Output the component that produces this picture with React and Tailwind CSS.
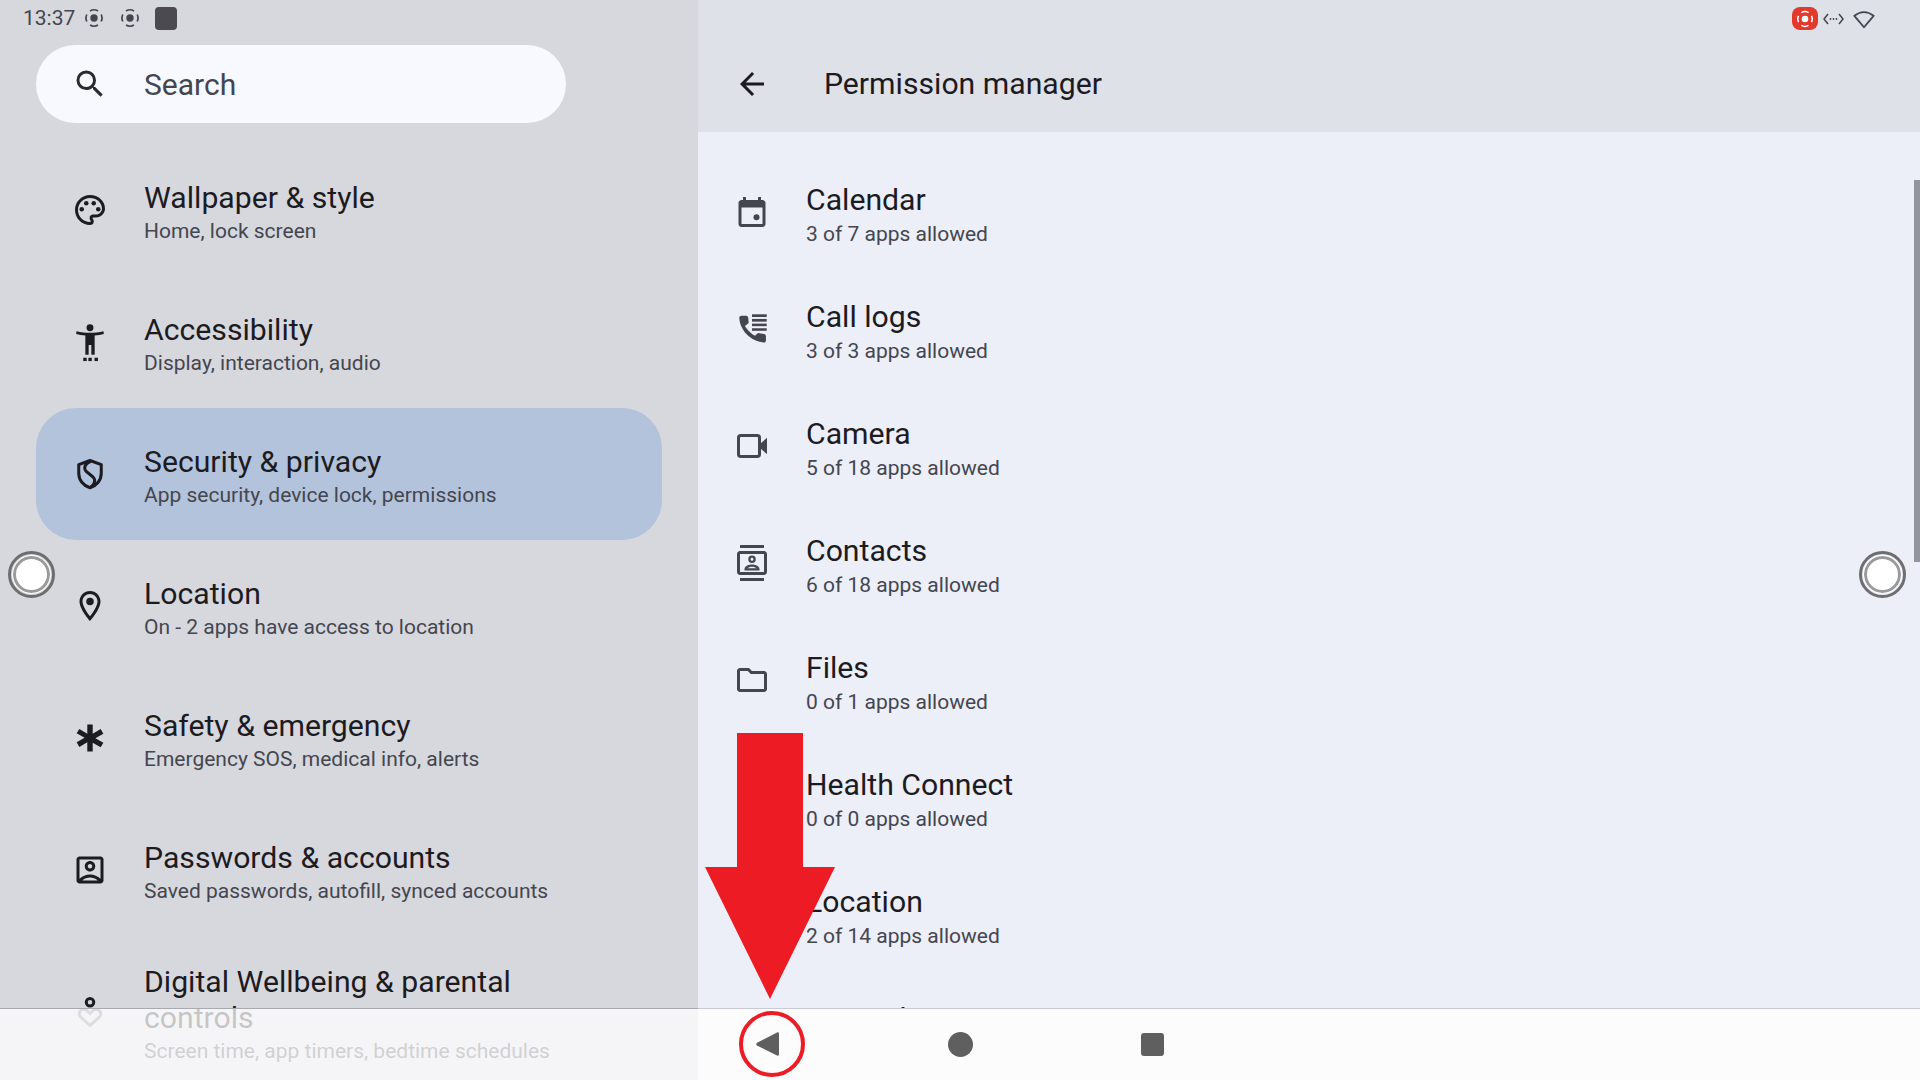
import React from "react";
import { MdSearch, MdOutlinePalette, MdOutlineLocationOn, MdOutlineAccountBox, MdArrowBack, MdOutlineContacts, MdOutlineFolder } from "react-icons/md";

const font = { fontFamily: "Roboto, sans-serif" };

function Access({ className }) {
  return (
    <svg viewBox="0 0 24 24" className={className} fill="currentColor" style={{ overflow: "visible" }}>
      <circle cx="12" cy="2.500" r="2.300" />
      <path d="M3 4.900c3 .7 6 1 9 1s6-.3 9-1l.2 1.800c-2 .5-4 .8-6.100 1v12.800h-2.200V14h-1.800v6.500H8.900V7.700c-2.100-.2-4.100-.5-6.100-1z" />
      <rect x="7.500" y="22.500" width="2.300" height="2.200" />
      <rect x="10.900" y="22.500" width="2.300" height="2.200" />
      <rect x="15" y="22.500" width="2.300" height="2.200" />
    </svg>
  );
}
function Shield({ className }) {
  return (
    <svg viewBox="0 0 24 24" className={className} fill="none" stroke="currentColor" strokeWidth="2">
      <path d="M12 3l7.500 2.700v5.800c0 4.500-3 8.300-7.500 9.700-4.500-1.400-7.500-5.200-7.500-9.700V5.700z" strokeLinejoin="round" />
      <path d="M12.500 3.500C8.500 5 7.500 8 9.500 10.300l4.500 3.700c2 1.800 1.200 5-1.500 6.500" />
    </svg>
  );
}
function Star({ className }) {
  return (
    <svg viewBox="0 0 24 24" className={className} fill="currentColor">
      <path d="M10.200 3h3.600v6.100l5.300-3.100 1.800 3.100-5.300 3 5.300 3-1.800 3.100-5.300-3.100V21h-3.600v-6.100l-5.300 3.100-1.800-3.100 5.300-3-5.300-3L4.900 6l5.300 3.100z" />
    </svg>
  );
}
function Wellbeing({ className }) {
  return (
    <svg viewBox="0 0 24 24" className={className} fill="none" stroke="currentColor" strokeWidth="2">
      <circle cx="12" cy="5.500" r="2.500" />
      <path strokeOpacity="0.5" d="M12 21l-6.200-5.600a2.900 2.900 0 0 1 0-4.300c1.200-1.100 3-1.100 4.200 0L12 13l2-1.900c1.200-1.100 3-1.100 4.200 0a2.900 2.900 0 0 1 0 4.300z" />
    </svg>
  );
}
function CalendarIcon({ className }) {
  return (
    <svg viewBox="0 0 24 24" className={className} fill="currentColor">
      <path d="M19 4h-1V2h-2v2H8V2H6v2H5c-1.100 0-2 .9-2 2v14c0 1.100.9 2 2 2h14c1.100 0 2-.9 2-2V6c0-1.100-.9-2-2-2zm0 16H5V9h14v11z" />
      <circle cx="15" cy="15.500" r="2" />
    </svg>
  );
}
function CallLog({ className }) {
  return (
    <svg viewBox="0 0 24 24" className={className} fill="currentColor">
      <path d="M3.500 4.500C3.500 3.700 4.200 3.200 5 3.200h3c1 0 1.500.6 1.500 1.600L9.800 8 7.300 10c1.400 2.500 4.200 5.300 6.700 6.500l2-1.800 4 .6c.9.2 1.300.7 1.300 1.500v2.700c0 1-.7 1.700-1.700 1.500C11 20 4 13 3.500 4.500z" />
      <rect x="12" y="2.200" width="9.800" height="1.800" />
      <rect x="12" y="5.300" width="9.800" height="1.800" />
      <rect x="12" y="8.400" width="9.800" height="1.700" />
      <rect x="12" y="11.500" width="9.800" height="1.700" />
    </svg>
  );
}
function Video({ className }) {
  return (
    <svg viewBox="0 0 24 24" className={className} fill="none" stroke="currentColor">
      <rect x="3" y="5" width="14" height="14" rx="1.500" strokeWidth="2" />
      <path d="M17.500 10.500L22 6.500v11l-4.500-4z" fill="currentColor" strokeWidth="0" />
    </svg>
  );
}
function Rec({ className }) {
  return (
    <svg viewBox="0 0 20 20" className={className} fill="none" stroke="currentColor" strokeWidth="1.700">
      <circle cx="10" cy="10" r="3.700" fill="currentColor" stroke="none" />
      <path d="M2.800 13.500A8.100 8.100 0 0 1 2.800 6.500M6 2.900A8.100 8.100 0 0 1 14 2.900M17.200 6.500A8.100 8.100 0 0 1 17.200 13.500M14 17.100A8.100 8.100 0 0 1 6 17.100" />
    </svg>
  );
}

const left = [
  { t: "Wallpaper & style", s: "Home, lock screen", I: MdOutlinePalette },
  { t: "Accessibility", s: "Display, interaction, audio", I: Access },
  { t: "Security & privacy", s: "App security, device lock, permissions", I: Shield, on: true },
  { t: "Location", s: "On - 2 apps have access to location", I: MdOutlineLocationOn },
  { t: "Safety & emergency", s: "Emergency SOS, medical info, alerts", I: Star },
  { t: "Passwords & accounts", s: "Saved passwords, autofill, synced accounts", I: MdOutlineAccountBox },
];

const right = [
  { t: "Calendar", s: "3 of 7 apps allowed", I: CalendarIcon },
  { t: "Call logs", s: "3 of 3 apps allowed", I: CallLog },
  { t: "Camera", s: "5 of 18 apps allowed", I: Video },
  { t: "Contacts", s: "6 of 18 apps allowed", I: MdOutlineContacts },
  { t: "Files", s: "0 of 1 apps allowed", I: MdOutlineFolder },
  { t: "Health Connect", s: "0 of 0 apps allowed" },
  { t: "Location", s: "2 of 14 apps allowed" },
  { t: "Microphone", s: "1 of 8 apps allowed" },
];

function Touch({ className }) {
  return (
    <div className={`absolute w-[47px] h-[47px] rounded-full border-[3px] border-[#6e6e70] flex items-center justify-center ${className}`}>
      <div className="w-[37px] h-[37px] rounded-full bg-white border-[3px] border-[#9a9a9c] outline outline-1 outline-white" />
    </div>
  );
}

export default function App() {
  return (
    <div className="relative w-[1920px] h-[1080px] overflow-hidden flex bg-[#eceef8]" style={font}>
      <aside className="w-[698px] h-full bg-[#d7d8de] shrink-0">
        <div className="h-[36px] mb-[9px] flex items-center pl-[23px] text-[#44464f]">
          <span className="text-[21px] leading-none">13:37</span>
          <Rec className="w-[20px] h-[20px] ml-[9px]" />
          <Rec className="w-[20px] h-[20px] ml-[16px]" />
          <div className="w-[22px] h-[23px] ml-[15px] rounded-[4px] bg-[#4a4a50]" />
        </div>
        <div className="mx-[36px] w-[530px] h-[78px] rounded-full bg-[#f8f9ff] flex items-center text-[#44464f] pl-[38px]">
          <MdSearch className="w-[36px] h-[36px] -ml-[2px] shrink-0 text-[#2a2b30]" />
          <span className="ml-[36px] mt-[2px] text-[30px] leading-none">Search</span>
        </div>
        <div className="mt-[21px] px-[36px]">
          {left.map(({ t, s, I, on }) => (
            <div key={t} className={`h-[132px] w-[626px] flex items-center pl-[36px] rounded-[40px] ${on ? "bg-[#b3c3db]" : ""}`}>
              <I className="w-[36px] h-[36px] shrink-0 text-[#1b1b21]" />
              <div className="ml-[36px] pt-[6px]">
                <div className="text-[30.2px] leading-[36px] text-[#1b1b21]">{t}</div>
                <div className="text-[21px] leading-[30px] text-[#44464f]">{s}</div>
              </div>
            </div>
          ))}
          <div className="w-[626px] flex items-center pl-[36px] pt-[26px]">
            <Wellbeing className="w-[36px] h-[36px] mb-[4px] shrink-0 text-[#1b1b21]" />
            <div className="ml-[36px] pt-[2px]">
              <div className="text-[30.2px] leading-[36px] text-[#1b1b21] w-[440px]">Digital Wellbeing &amp; parental controls</div>
              <div className="text-[21px] leading-[30px] text-[#44464f]">Screen time, app timers, bedtime schedules</div>
            </div>
          </div>
        </div>
      </aside>
      <main className="flex-1 h-full">
        <header className="h-[132px] bg-[#dfe1e9] relative flex items-center pl-[36px] pt-[36px]">
          <MdArrowBack className="w-[36px] h-[36px] text-[#1b1b21]" />
          <span className="ml-[54px] text-[30.2px] leading-none text-[#1b1b21]">Permission manager</span>
          <div className="absolute right-[45px] top-[7px] flex items-center text-[#44464f]">
            <div className="w-[26px] h-[23px] rounded-[8px] bg-[#e3382c] flex items-center justify-center text-white">
              <Rec className="w-[18px] h-[18px]" />
            </div>
            <svg viewBox="0 0 21 12" className="ml-[5px] w-[21px] h-[12px]" fill="none" stroke="currentColor" strokeWidth="1.500">
              <path d="M5 1L1 6l4 5M16 1l4 5-4 5" />
              <circle cx="7.500" cy="6" r=".9" fill="currentColor" stroke="none" />
              <circle cx="10.500" cy="6" r=".9" fill="currentColor" stroke="none" />
              <circle cx="13.500" cy="6" r=".9" fill="currentColor" stroke="none" />
            </svg>
            <svg viewBox="0 0 24 24" className="ml-[9px] w-[22px] h-[22px]" fill="none" stroke="currentColor" strokeWidth="2">
              <path d="M1.500 8.500Q12 .5 22.500 8.500L12 21z" strokeLinejoin="round" />
            </svg>
          </div>
        </header>
        <div className="pt-[26px] relative">
          <div className="absolute right-0 top-[48px] w-[6px] h-[382px] bg-[#92949f]" />
          {right.map(({ t, s, I }) => (
            <div key={t} className="h-[117px] flex items-center pl-[36px]">
              <div className="w-[36px] h-[36px] mb-[9px] shrink-0">{I ? <I className="w-[36px] h-[36px] text-[#44464f]" /> : null}</div>
              <div className="ml-[36px] mb-[1px]">
                <div className="text-[30.2px] leading-[36px] text-[#1b1b21]">{t}</div>
                <div className="text-[21px] leading-[33px] text-[#44464f]">{s}</div>
              </div>
            </div>
          ))}
        </div>
      </main>

      <div className="absolute left-0 right-0 bottom-0 h-[72px] flex">
        <div className="w-[698px] h-full bg-white/75 border-t border-[#a9aaae]" />
        <div className="flex-1 h-full bg-[#fcfcfc] border-t border-[#c9cad3]" />
      </div>
      <svg viewBox="0 0 26 26" className="absolute left-[755px] top-[1031px] w-[26px] h-[26px]" fill="#5f5f5f">
        <path d="M24 2.500v21c0 1-1 1.500-2 1L2 14.500c-1-.5-1-2 0-2.800L22 1.500c1-.5 2 0 2 1z" />
      </svg>
      <div className="absolute left-[948px] top-[1032px] w-[25px] h-[25px] rounded-full bg-[#5f5f5f]" />
      <div className="absolute left-[1141px] top-[1033px] w-[23px] h-[23px] rounded-[3px] bg-[#5f5f5f]" />

      <svg viewBox="0 0 130 266" className="absolute left-[705px] top-[733px] w-[130px] h-[266px]" fill="#ed1c24">
        <path d="M32 0h66v134h32L65 266 0 134h32z" />
      </svg>
      <div className="absolute left-[739px] top-[1011px] w-[66px] h-[66px] rounded-full border-[4px] border-[#ed1c24]" />
      <Touch className="left-[8px] top-[551px]" />
      <Touch className="left-[1859px] top-[551px]" />
    </div>
  );
}
